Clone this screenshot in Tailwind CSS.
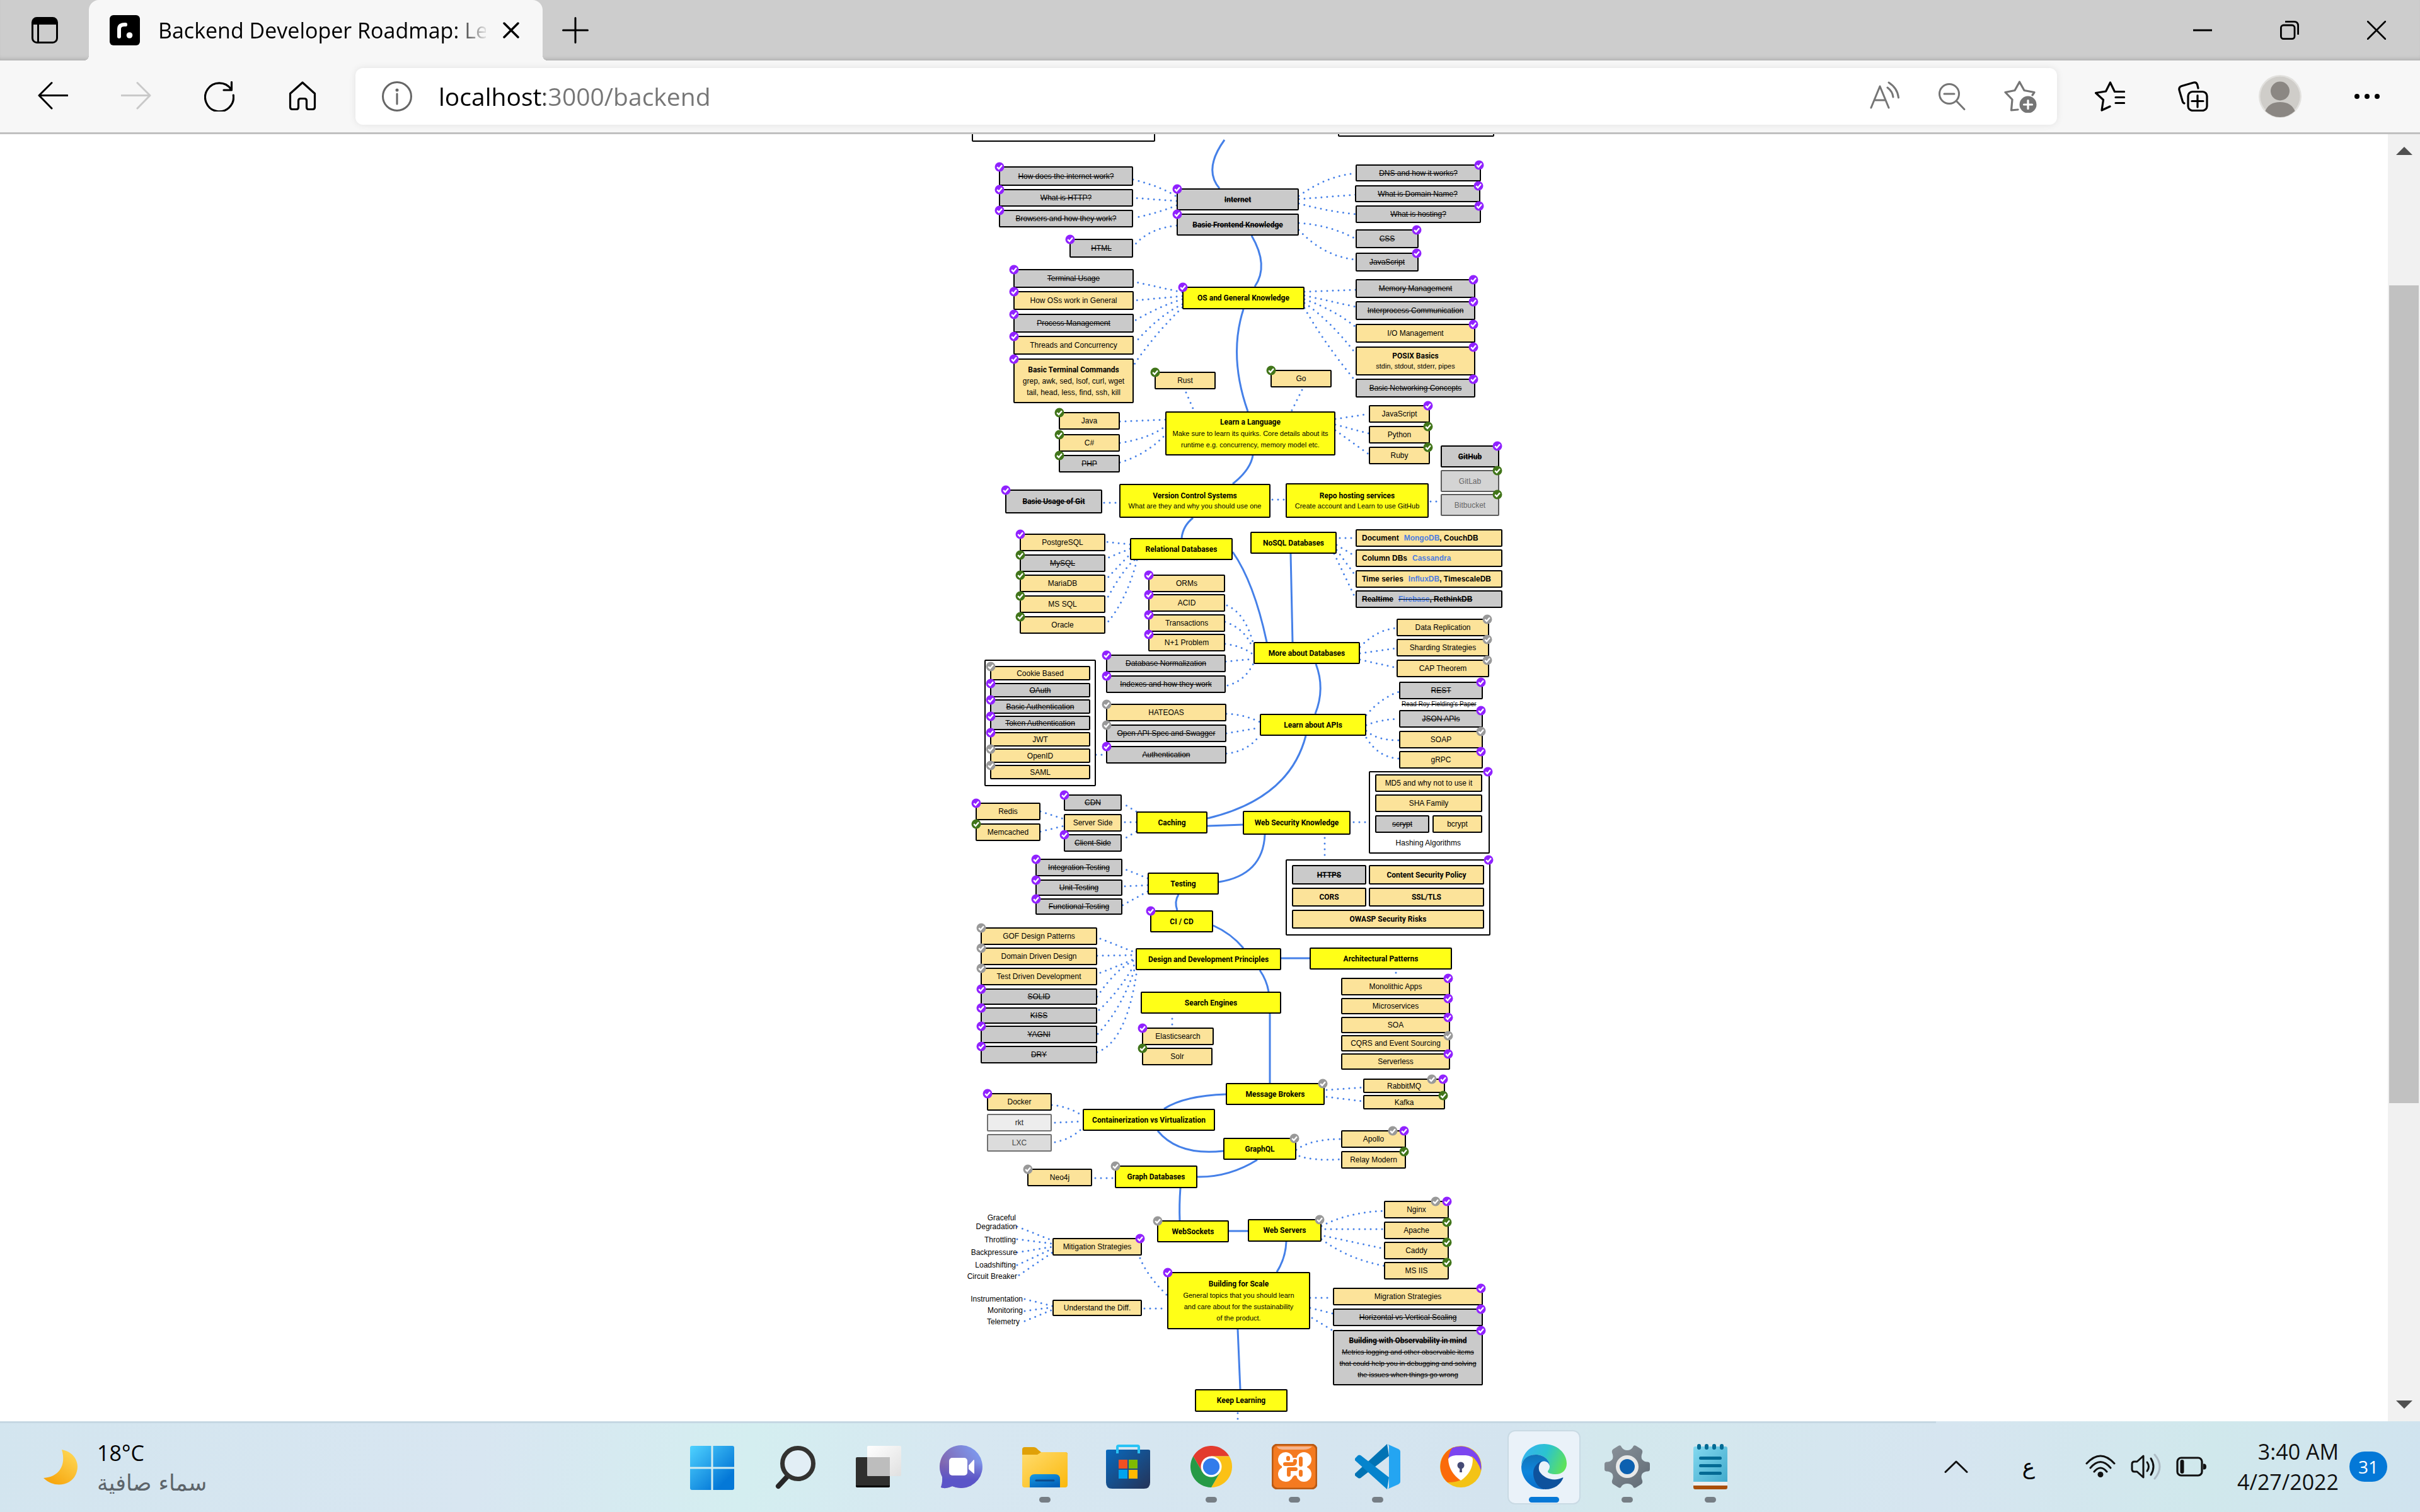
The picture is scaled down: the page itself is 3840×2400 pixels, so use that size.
<!DOCTYPE html>
<html lang="en">
<head>
<meta charset="utf-8">
<title>Backend Developer Roadmap: Learn to become a modern backend developer</title>
<script src="https://cdn.jsdelivr.net/npm/@tailwindcss/browser@4"></script>
</head>
<body class="h-screen overflow-hidden bg-white font-['Open_Sans',sans-serif] text-black">
<div class="flex h-full flex-col">

  <!-- Tab strip -->
  <header class="flex h-24 shrink-0 bg-[#cdcdcd] shadow-[inset_0_-6px_6px_-4px_rgba(0,0,0,0.16)]">
    <button aria-label="Tab actions" class="flex w-[141px] items-center justify-center">
      <svg class="size-[42px]" viewBox="0 0 42 42" fill="none" stroke="#000" stroke-width="3"><rect x="1.5" y="1.5" width="39" height="39" rx="7"/><path d="M2 6Q2 2 8 2H34Q40 2 40 8V12H2Z" fill="#000" stroke="none"/><path d="M10.5 12V40"/></svg>
    </button>
    <div class="relative flex w-[720px] items-center rounded-t-2xl bg-[#f7f7f7] pr-[30px] pl-[33px]">
      <span class="absolute bottom-0 -left-2 size-2 bg-[radial-gradient(circle_at_0_0,transparent_8px,#f7f7f7_8px)]"></span>
      <span class="absolute -right-2 bottom-0 size-2 bg-[radial-gradient(circle_at_100%_0,transparent_8px,#f7f7f7_8px)]"></span>
      <svg class="size-12 shrink-0" viewBox="0 0 48 48"><rect width="48" height="48" rx="6"/><path d="M15 34V22Q15 14.500 25 15" fill="none" stroke="#fff" stroke-width="6" stroke-linecap="round"/><circle cx="31.500" cy="32" r="4.800" fill="#fff"/></svg>
      <span class="ml-[29px] w-[520px] overflow-hidden text-[34px] leading-12 whitespace-nowrap [mask-image:linear-gradient(90deg,#000_470px,transparent_525px)]">Backend Developer Roadmap: Learn</span>
      <button aria-label="Close tab" class="ml-auto flex size-10 items-center justify-center">
        <svg class="size-[26px]" viewBox="0 0 26 26" stroke="#000" stroke-width="3.500" stroke-linecap="round"><path d="M2 2L24 24M24 2L2 24"/></svg>
      </button>
    </div>
    <button aria-label="New tab" class="flex w-26 items-center justify-center">
      <svg class="size-[42px]" viewBox="0 0 42 42" stroke="#000" stroke-width="3" stroke-linecap="round"><path d="M21 1.500V40.500M1.500 21H40.500"/></svg>
    </button>
    <div class="ml-auto flex">
      <button aria-label="Minimize" class="flex w-[138px] items-center justify-center"><svg class="size-[30px]" viewBox="0 0 30 30"><path d="M0 15H30" stroke="#000" stroke-width="3"/></svg></button>
      <button aria-label="Restore" class="flex w-[138px] items-center justify-center"><svg class="size-[30px]" viewBox="0 0 30 30" fill="none" stroke="#000" stroke-width="2.800"><rect x="1.400" y="7" width="21.600" height="21.600" rx="4"/><path d="M8 1.400H22Q28.600 1.400 28.600 8V22"/></svg></button>
      <button aria-label="Close window" class="flex w-[138px] items-center justify-center"><svg class="size-[30px]" viewBox="0 0 30 30"><path d="M0 0L30 30M30 0L0 30" stroke="#000" stroke-width="2.800"/></svg></button>
    </div>
  </header>

  <!-- Toolbar -->
  <nav class="flex h-[117px] shrink-0 items-center border-b-3 border-[#c0c0c0] bg-[#f7f7f7] px-[18px]">
    <button aria-label="Back" class="flex w-33 justify-center"><svg class="size-12" viewBox="0 0 48 48" fill="none" stroke="#000" stroke-width="3" stroke-linecap="round" stroke-linejoin="round"><path d="M47 22.500H2M22 2.500L2 22.500L22 43"/></svg></button>
    <button aria-label="Forward" class="flex w-33 justify-center"><svg class="size-12" viewBox="0 0 48 48" fill="none" stroke="#c9c9c9" stroke-width="3" stroke-linecap="round" stroke-linejoin="round"><path d="M1 22.500H46M26 2.500L46 22.500L26 43"/></svg></button>
    <button aria-label="Refresh" class="flex w-33 justify-center"><svg class="size-12" viewBox="0 0 48 48" fill="none" stroke="#000" stroke-width="3.200" stroke-linecap="round" stroke-linejoin="round"><path d="M46.300 22A22.500 22.500 0 1 1 42.500 12.500M43.500 1.500V14H31"/></svg></button>
    <button aria-label="Home" class="flex w-33 justify-center"><svg class="size-12" viewBox="0 0 48 48" fill="none" stroke="#000" stroke-width="3.200" stroke-linejoin="round"><path d="M4.500 19.500L24 2L43.500 19.500V41Q43.500 44.500 40 44.500H33.500Q30.500 44.500 30.500 41V31Q30.500 27.500 27 27.500H21Q17.500 27.500 17.500 31V41Q17.500 44.500 14.500 44.500H8Q4.500 44.500 4.500 41Z"/></svg></button>
    <div class="mx-[18px] flex h-[90px] grow items-center rounded-xl bg-white pr-1 pl-[42px] shadow-[0_0_12px_rgba(0,0,0,0.09)]">
      <button aria-label="View site information"><svg class="size-12" viewBox="0 0 48 48" fill="none" stroke="#666" stroke-width="3"><circle cx="24" cy="24" r="22.500"/><path d="M24 20V36" stroke-linecap="round"/><circle cx="24" cy="14" r="2.500" fill="#666" stroke="none"/></svg></button>
      <input aria-label="Address" value="localhost:3000/backend" class="ml-[42px] min-w-0 grow bg-[linear-gradient(90deg,#000_168px,#767676_168px)] bg-clip-text text-[39px] leading-13 text-transparent outline-none">
      <button aria-label="Read aloud" class="flex w-27 justify-center"><svg class="size-12" viewBox="0 0 48 48" fill="none" stroke="#757575" stroke-width="3" stroke-linecap="round" stroke-linejoin="round"><path d="M3 42L17 8L31 42M8 30H26M29 10Q37 16 38 25M31 2Q45 11 46.500 26"/></svg></button>
      <button aria-label="Zoom out" class="flex w-27 justify-center"><svg class="size-12" viewBox="0 0 48 48" fill="none" stroke="#757575" stroke-width="3" stroke-linecap="round"><circle cx="19" cy="20" r="15.500"/><path d="M11 20H27M31 32L43 44.500"/></svg></button>
      <button aria-label="Add this page to favorites" class="flex w-27 justify-center"><svg class="h-13 w-[52px]" viewBox="0 0 52 52" fill="none" stroke="#757575" stroke-width="3.200" stroke-linejoin="round" stroke-linecap="round"><path d="M22 47L11.500 48L13 31L2 19.500L17 16.500L24.500 3L32 16.500L48 19.500L45 24"/><circle cx="38" cy="39" r="13.500" fill="#757575" stroke="none"/><path d="M38 32.500V45.500M31.500 39H44.500" stroke="#fff"/></svg></button>
    </div>
    <button aria-label="Favorites" class="flex w-33 justify-center"><svg class="size-12" viewBox="0 0 48 48" fill="none" stroke="#000" stroke-width="3.200" stroke-linecap="round" stroke-linejoin="round"><path d="M24 40L11 46L13.500 29.500L1.500 18.500L17.500 16L24.500 2L31.500 16.500H46.500M33 25.500H46.500M33 34.500H46.500"/></svg></button>
    <button aria-label="Collections" class="flex w-33 justify-center"><svg class="size-12" viewBox="0 0 48 48" fill="none" stroke="#000" stroke-width="3.200" stroke-linecap="round" stroke-linejoin="round"><path d="M10 35Q7.500 34 7 31L2 14Q1 9 6 7.500L25 2Q29 1 30.500 5L32 11"/><rect x="16" y="16.500" width="30" height="30" rx="7"/><path d="M31 22.500V41M22 31.500H40"/></svg></button>
    <button aria-label="Profile" class="flex w-36 justify-center"><svg class="size-[68px]" viewBox="0 0 68 68"><defs><clipPath id="face"><circle cx="34" cy="34" r="33"/></clipPath></defs><circle cx="34" cy="34" r="34" fill="#e2e1de"/><circle cx="34" cy="34" r="31.500" fill="#cfcdc9"/><g fill="#8b8783" clip-path="url(#face)"><circle cx="34" cy="25.500" r="15"/><path d="M10 58Q16 43 34 43T58 58Q48 68 34 68T10 58Z"/></g></svg></button>
    <button aria-label="Settings and more" class="flex w-33 justify-center"><svg class="size-12" viewBox="0 0 48 48"><circle cx="8" cy="24" r="4"/><circle cx="24" cy="24" r="4"/><circle cx="40" cy="24" r="4"/></svg></button>
  </nav>

  <!-- Page viewport -->
  <div class="flex min-h-0 grow">
    <main class="min-w-0 grow overflow-hidden pl-[131px]">
      <div id="map" class="relative mx-auto h-full w-[880px] font-['Liberation_Sans',sans-serif] text-xs">
        <svg id="links" class="absolute inset-0 h-full w-full overflow-visible" fill="none" stroke="#4580e8" stroke-width="3"></svg>
      </div>
    </main>
    <aside class="flex w-[51px] shrink-0 flex-col items-center bg-[#f1f1f1]">
      <svg class="mt-5 h-[13px] w-[26px]" viewBox="0 0 26 13"><path d="M0 13L13 0L26 13Z" fill="#505050"/></svg>
      <div class="mt-[207px] h-[1298px] w-[47px] bg-[#c1c1c1]"></div>
      <svg class="mt-auto mb-5 h-[13px] w-[26px]" viewBox="0 0 26 13"><path d="M0 0L13 13L26 0Z" fill="#505050"/></svg>
    </aside>
  </div>

  <!-- Taskbar -->
  <footer class="relative grid h-36 shrink-0 grid-cols-[1fr_auto_1fr] items-center bg-[linear-gradient(100deg,#d3e5ef_0%,#d8e6f1_20%,#d4eef0_31%,#d7e7f1_40%,#d4e4ef_62%,#d3e8ed_66%,#d6e5f0_80%,#d0e8ec_91%,#d0e3ef_100%)]">
    <span class="absolute top-0 left-0 h-[3px] w-4/5 bg-[#c5d7e2]"></span>
    <button class="flex items-center pt-1 pl-[62px] text-left">
      <svg class="size-[66px]" viewBox="0 0 66 66"><defs><linearGradient id="moon" x1="1" y1="0" x2="0.300" y2="1"><stop offset="0" stop-color="#ffdc5c"/><stop offset="1" stop-color="#f7a60e"/></linearGradient></defs><path d="M36 4C58 8 66 28 58 44C50 61 24 66 7 49C30 48 44 30 36 4Z" fill="url(#moon)"/></svg>
      <span class="ml-[26px] flex flex-col">
        <span class="text-[34px] leading-12">18°C</span>
        <span dir="rtl" class="font-['DejaVu_Sans',sans-serif] text-[35px] leading-12 text-[#5d646a]">سماء صافية</span>
      </span>
    </button>

    <div class="ml-1 flex h-36">
      <button aria-label="Start" class="flex w-33 items-center justify-center pt-[3px]"><svg class="size-[70px]" viewBox="0 0 70 70"><defs><linearGradient id="win" x1="0" y1="0" x2="1" y2="1"><stop offset="0" stop-color="#4fd2ff"/><stop offset="0.800" stop-color="#0478d7"/></linearGradient></defs><path d="M3 0H33.500V33.500H0V3Q0 0 3 0ZM36.500 0H67Q70 0 70 3V33.500H36.500ZM0 36.500H33.500V70H3Q0 70 0 67ZM36.500 36.500H70V67Q70 70 67 70H36.500Z" fill="url(#win)"/></svg></button>
      <button aria-label="Search" class="flex w-33 items-center justify-center pt-[3px]"><svg class="size-[70px]" viewBox="0 0 70 70" fill="none"><path d="M22 49L8 64" stroke="#262626" stroke-width="8" stroke-linecap="round"/><circle cx="39" cy="28" r="24.500" fill="#e2eef5" stroke="#333230" stroke-width="7"/></svg></button>
      <button aria-label="Task view" class="flex w-33 items-center justify-center"><svg class="size-[72px]" viewBox="0 0 72 72"><defs><linearGradient id="tv" x1="0" y1="0" x2="1" y2="1"><stop offset="0" stop-color="#fff"/><stop offset="1" stop-color="#e0e0e0"/></linearGradient></defs><rect y="21" width="54" height="48" rx="2" fill="#2f2f2e"/><path d="M0 66H54Q54 69 51 69H3Q0 69 0 66Z" fill="#000"/><rect x="18" y="3" width="54" height="48" rx="2" fill="url(#tv)"/><path d="M18 21H54V51H20Q18 51 18 49Z" fill="#bdbdbd"/></svg></button>
      <button aria-label="Chat" class="flex w-33 items-center justify-center"><svg class="size-[70px]" viewBox="0 0 70 70"><defs><linearGradient id="chat" x1="1" y1="0.200" x2="0.200" y2="0.700"><stop offset="0" stop-color="#7d9cf3"/><stop offset="1" stop-color="#8165ae"/></linearGradient><linearGradient id="chat2" x1="0" y1="0" x2="0" y2="1"><stop offset="0.400" stop-color="#5b55c8" stop-opacity="0"/><stop offset="0.800" stop-color="#5b55c8"/></linearGradient></defs><path d="M35 1A34 34 0 1 1 20 66Q10 71 2 68Q5 60 4 51A34 34 0 0 1 35 1Z" fill="url(#chat)"/><path d="M35 1A34 34 0 1 1 20 66Q10 71 2 68Q5 60 4 51A34 34 0 0 1 35 1Z" fill="url(#chat2)"/><rect x="15" y="21" width="29" height="28" rx="5" fill="#fff"/><path d="M46 33L54 24Q55 24 55 26V45Q55 47 54 46L46 39Z" fill="#fff"/></svg></button>
      <button aria-label="File Explorer" class="relative flex w-33 items-center justify-center"><svg class="size-[72px]" viewBox="0 0 72 72"><defs><linearGradient id="fold" x1="0" y1="0" x2="1" y2="1"><stop offset="0" stop-color="#ffdc6e"/><stop offset="1" stop-color="#fbb80c"/></linearGradient><linearGradient id="fold2" x1="0" y1="0" x2="0.600" y2="1"><stop offset="0" stop-color="#169be4"/><stop offset="1" stop-color="#0463ba"/></linearGradient></defs><path d="M0 9Q0 5 4 5H18Q22 5 25 9L30 13H68Q72 13 72 16V30H0Z" fill="#e0a108"/><path d="M0 17H24L30 13H69Q72 14 72 17V65Q72 69 68 69H4Q0 69 0 65Z" fill="url(#fold)"/><path d="M12 69V56Q12 48 20 48H52Q60 48 60 56V69Z" fill="url(#fold2)"/><path d="M22 58H50" stroke="#0a4a8c" stroke-width="3" stroke-linecap="round"/></svg><span class="absolute bottom-[15px] h-[9px] w-[18px] rounded-full bg-[#767e85]"></span></button>
      <button aria-label="Microsoft Store" class="flex w-33 items-center justify-center"><svg class="size-[72px]" viewBox="0 0 72 72"><defs><linearGradient id="store" x1="0" y1="0" x2="1" y2="1"><stop offset="0" stop-color="#0969bd"/><stop offset="1" stop-color="#253357"/></linearGradient></defs><path d="M1 11Q1 9 4 9H68Q71 9 71 11V61Q71 71 61 71H11Q1 71 1 61Z" fill="url(#store)"/><path d="M19 15V5Q19 3 21 3H51Q53 3 53 5V15" fill="none" stroke="#29c3f5" stroke-width="4"/><path d="M21 25H35V39H21Z" fill="#f25022"/><path d="M37 25H51V39H37Z" fill="#7fba00"/><path d="M21 41H35V55H21Z" fill="#00a4ef"/><path d="M37 41H51V55H37Z" fill="#ffb900"/></svg></button>
      <button aria-label="Google Chrome" class="relative flex w-33 items-center justify-center"><svg class="size-[66px]" viewBox="-33 -33 66 66"><path d="M-28.600 -16.500A33 33 0 0 1 28.600 -16.500H0L-14.300 8.200Z" fill="#e33b2e"/><path d="M28.600 -16.500A33 33 0 0 1 0 33L14.300 8.200L0 -16.500Z" fill="#fbc116"/><path d="M0 33A33 33 0 0 1 -28.600 -16.500L-14.300 8.200L14.300 8.200Z" fill="#269a46"/><circle r="16.500" fill="#fff"/><circle r="13.200" fill="#327ceb"/></svg><span class="absolute bottom-[15px] h-[9px] w-[18px] rounded-full bg-[#767e85]"></span></button>
      <button aria-label="XAMPP" class="relative flex w-33 items-center justify-center"><svg class="size-[72px]" viewBox="0 0 72 72"><rect x="1" y="1" width="70" height="70" rx="8" fill="#f47a20" stroke="#b85a15" stroke-width="3"/><path d="M8 4H64Q60 9 50 9H20Q10 9 8 4Z" fill="#f5b48e"/><g fill="#fff"><circle cx="22" cy="25" r="12"/><circle cx="51" cy="25" r="12"/><circle cx="22" cy="48" r="12"/><circle cx="51" cy="48" r="12"/><path d="M16 33H56V42H16ZM26 22H46V52H26Z"/></g><path d="M36 12V19M37 53V62" stroke="#f47a20" stroke-width="6" stroke-linecap="round"/><path d="M21 32H33Q37 32 37 27M26 22V24M46 23V33M38 40H27V49M46 44V49" fill="none" stroke="#f47a20" stroke-width="6" stroke-linecap="round" stroke-linejoin="round"/></svg><span class="absolute bottom-[15px] h-[9px] w-[18px] rounded-full bg-[#767e85]"></span></button>
      <button aria-label="Visual Studio Code" class="relative flex w-33 items-center justify-center"><svg class="size-[72px]" viewBox="0 0 72 72"><path d="M51 0L0 47Q-1 49 1 51L5 54Q7 55 9 54L54 19Z" fill="#0073b4"/><path d="M54 53L9 18Q7 17 5 18L1 22Q-1 24 0 26L51 72Z" fill="#0584cd"/><path d="M51 72Q54 71 54 68V4Q54 1 51 0L69 8Q72 9.500 72 12V60Q72 62.500 69 64Z" fill="#24a5f2"/></svg><span class="absolute bottom-[15px] h-[9px] w-[18px] rounded-full bg-[#767e85]"></span></button>
      <button aria-label="Secure Browser" class="flex w-33 items-center justify-center"><svg class="size-[66px]" viewBox="0 0 66 66"><circle cx="33" cy="33" r="33" fill="#f3c316"/><path d="M22 2A33 33 0 0 0 12 58Q26 58 33 54L14 22Z" fill="#fb6b0a"/><path d="M18 4A33 33 0 0 1 65 39Q60 24 51 17L13 21Q15 8 20 3Z" fill="#7c45f0"/><path d="M13 21Q15 16 25 15H41Q51 16 52 21Q52 42 33 55Q14 42 13 21Z" fill="#fff"/><circle cx="33" cy="31" r="5.500" fill="#454a75"/><path d="M31.500 33H34.500L35 42H31Z" fill="#454a75"/></svg></button>
      <button aria-label="Microsoft Edge" class="relative flex w-33 items-center justify-center"><span class="absolute inset-x-2 top-[14px] bottom-3 rounded-xl border-2 border-[#c9dae4] bg-[#eaf2f9]"></span><svg class="relative size-[72px]" viewBox="0 0 72 72"><defs><linearGradient id="e1" x1="0" y1="0.300" x2="1" y2="0.600"><stop offset="0" stop-color="#35b3f0"/><stop offset="0.500" stop-color="#2bc3cf"/><stop offset="1" stop-color="#5fe25a"/></linearGradient><linearGradient id="e2" x1="0.300" y1="0" x2="0.300" y2="1"><stop offset="0" stop-color="#1273b8"/><stop offset="0.500" stop-color="#0e86dc"/><stop offset="1" stop-color="#0a6cc8"/></linearGradient></defs><path d="M0 33C2 13 17 0 36 0C56 0 72 14 72 31C72 42 64 48 55 48C47 48 42 46 42 44C42 42 45 41 45 35C45 24 34 17 23 17C11 17 2 25 0 33Z" fill="url(#e1)"/><path d="M0 36C1 24 11 17 23 17C34 17 45 24 45 35C43 27 35 26 31 29C22 34 20 52 36 65L36 72C16 72 0 56 0 36Z" fill="url(#e2)"/><path d="M33 27C24 30 19 38 19 46C19 60 28 71 38 72C53 72 62 64 66 55C67 53 66 53 64 54C51 60 35 54 29 44C26 37 29 30 33 27Z" fill="#0e529d"/></svg><span class="absolute bottom-[15px] h-[9px] w-12 rounded-full bg-[#0678d6]"></span></button>
      <button aria-label="Settings" class="relative flex w-33 items-center justify-center"><svg class="size-[72px]" viewBox="-36 -36 72 72"><defs><linearGradient id="gear" x1="0" y1="0" x2="1" y2="1"><stop offset="0" stop-color="#8d949c"/><stop offset="1" stop-color="#5f6a74"/></linearGradient></defs><path d="M-22 -28L-14 -33Q-10 -35 -9 -31Q-6 -26 0 -26T9 -31Q10 -35 14 -33L22 -28Q25 -26 24 -22Q21 -15 24 -11Q28 -7 33 -7.500Q36 -7 36 -4V4Q36 7 33 7.500Q28 7 24 11Q21 15 24 22Q25 26 22 28L14 33Q10 35 9 31Q6 27 0 27T-9 31Q-10 35 -14 33L-22 28Q-25 26 -24 22Q-21 15 -24 11Q-28 7 -33 7.500Q-36 7 -36 4V-4Q-36 -7 -33 -7.500Q-28 -7 -24 -11Q-21 -15 -24 -22Q-25 -26 -22 -28Z" fill="url(#gear)"/><circle r="15" fill="#0c60b0" stroke="#e8e8e8" stroke-width="6"/></svg><span class="absolute bottom-[15px] h-[9px] w-[18px] rounded-full bg-[#767e85]"></span></button>
      <button aria-label="Notepad" class="relative flex w-33 items-center justify-center"><svg class="h-[72px] w-[54px]" viewBox="0 0 54 72"><defs><linearGradient id="note" x1="0" y1="0" x2="1" y2="1"><stop offset="0" stop-color="#84d9f0"/><stop offset="1" stop-color="#41aacc"/></linearGradient></defs><path d="M0 60H54V69Q54 72 51 72H3Q0 72 0 69Z" fill="#a94f0b"/><path d="M0 56H54V66H0Z" fill="#eee"/><path d="M0 7Q0 4 3 4H51Q54 4 54 7V60H0Z" fill="url(#note)"/><path d="M9 3V6M21 3V6M33 3V6M45 3V6" stroke="#046a94" stroke-width="6" stroke-linecap="round"/><path d="M11.500 22.500H42.500M11.500 34.500H42.500M11.500 46.500H42.500" stroke="#046a94" stroke-width="5" stroke-linecap="round"/></svg><span class="absolute bottom-[15px] h-[9px] w-[18px] rounded-full bg-[#767e85]"></span></button>
    </div>

    <div class="flex items-center justify-end pr-[52px]">
      <button aria-label="Show hidden icons"><svg class="h-5 w-[38px]" viewBox="0 0 38 20" fill="none" stroke="#111" stroke-width="3" stroke-linecap="round" stroke-linejoin="round"><path d="M2 18.500L19 2L36 18.500"/></svg></button>
      <button aria-label="Keyboard language" class="ml-20 w-8 font-['DejaVu_Sans',sans-serif] text-[34px] leading-12">ع</button>
      <button aria-label="Network, sound and battery" class="ml-[74px] flex items-center gap-6">
        <svg class="size-12" viewBox="0 0 48 48" fill="none" stroke="#111" stroke-width="3" stroke-linecap="round"><path d="M2 19Q24 -5 46 19M8 26Q24 7 40 26M14 32Q24 20 34 32"/><circle cx="24" cy="36.500" r="4.500" fill="#111" stroke="none"/></svg>
        <svg class="size-12" viewBox="0 0 48 48" fill="none" stroke="#111" stroke-width="3" stroke-linecap="round" stroke-linejoin="round"><path d="M2 20Q2 16 6 16H10L20 7V41L10 32H6Q2 32 2 28ZM26 17Q31 24 26 31M32 11Q40 24 32 37"/><path d="M38 5Q54 24 38 43" stroke="#aebbc4"/></svg>
        <svg class="size-12" viewBox="0 0 48 48" fill="none" stroke="#111" stroke-width="3.200"><rect x="2" y="10" width="39" height="28" rx="6"/><path d="M9.500 16V32" stroke-width="6" stroke-linecap="round"/><path d="M43 19.500H45Q48 20 48 24T45 28.500H43Z" fill="#111" stroke="none"/></svg>
      </button>
      <button class="ml-[42px] flex w-[168px] flex-col text-right text-[34px] leading-12 whitespace-nowrap text-[#111]"><span class="w-full">3:40 AM</span><span class="w-full">4/27/2022</span></button>
      <button aria-label="31 notifications" class="ml-[17px] h-12 w-15 rounded-full bg-[#0478d7] text-[28px] leading-12 text-white">31</button>
    </div>
  </footer>
</div>

<script>
// Connector curves between topics; dotted ones lead to sub-topics.
const solid = [
  "M423 9Q389 56 415 86","M466 161Q494 209 471 242","M453 278Q429 352 460 440","M468 510Q464 533 436 555","M373 609Q357 622 355 641",
  "M436 663Q470 712 490 806","M528 666L531 806","M568 841Q583 880 567 920","M552 955Q526 1055 396 1086","M396 1098L452 1096",
  "M487 1112Q484 1176 414 1187","M350 1207Q343 1218 348 1232","M405 1256Q434 1269 453 1292","M479 1327Q490 1343 493 1361","M495 1396V1506",
  "M513 1308H558","M425 1524Q360 1526 327 1547","M317 1582Q350 1622 421 1614","M475 1628Q430 1656 380 1655","M353 1673Q351 1700 352 1724",
  "M430 1741H460","M521 1758Q520 1784 506 1806","M444 1897L448 1992"
];
const dotted = [
  "M278 72Q320 82 347 99","M347 106L278 101","M347 113Q315 126 278 133","M347 145Q300 150 278 179","M541 98Q585 66 631 62","M541 103L631 96","M541 110Q585 122 631 127","M541 141Q590 144 631 166","M541 152Q580 194 631 199",
  "M356 251L279 234","M356 257L279 264","M356 262Q315 275 279 297","M356 270Q320 287 282 330","M356 275Q310 320 280 365",
  "M550 250L631 247","M550 256L631 274","M550 262Q600 280 631 306","M550 268Q590 295 631 348","M550 276Q580 330 631 392",
  "M362 410L375 440","M546 406L529 440","M257 456L329 453","M257 490Q300 484 329 464","M257 521Q300 508 329 477","M599 452L652 444","M599 461L652 475","M599 470L652 508",
  "M232 585H256","M499 580H520","M750 583H766","M273 651L234 647","M273 658L234 674","M276 664Q260 680 234 708","M280 676Q262 690 234 742","M284 676Q268 740 234 779",
  "M606 641H631","M601 652L631 670","M601 660L631 701","M597 666L631 737",
  "M427 748Q455 760 468 806","M424 774Q455 785 466 812","M424 809Q450 812 469 826","M425 837L469 833","M428 875Q455 868 469 840",
  "M638 814Q665 786 696 784","M638 824L696 816","M638 834L696 847","M426 920Q455 921 479 933","M426 951L479 942","M426 983Q460 980 479 954","M219 985H235",
  "M648 922Q672 894 700 885","M648 938Q670 929 700 928","M648 947Q665 962 700 962","M648 958Q668 990 700 991",
  "M283 1075L261 1062","M283 1092H261","M283 1107L261 1120","M131 1075L168 1087","M131 1107L168 1098","M628 1092H652","M582 1117V1150",
  "M301 1181L261 1165","M301 1192L261 1194","M301 1202L261 1224","M226 1277L282 1299","M221 1304L282 1303","M226 1331Q260 1318 282 1308","M221 1369Q250 1325 282 1310","M224 1390Q255 1362 282 1315","M222 1428Q262 1385 282 1320","M221 1457Q268 1440 284 1327",
  "M340 1404V1418","M695 1331V1339","M585 1517L643 1513","M585 1528L643 1535","M149 1541Q175 1543 198 1558","M154 1569L198 1567","M154 1600Q180 1595 198 1577",
  "M537 1612Q560 1595 608 1595","M542 1622Q565 1630 608 1627","M218 1657H249","M577 1733Q620 1711 676 1709","M583 1738H676","M582 1749L676 1769","M577 1754Q620 1786 676 1796",
  "M94 1734L150 1756","M94 1754L150 1761","M94 1775L150 1766","M94 1795L150 1769","M97 1811L150 1775","M289 1784Q300 1812 332 1843",
  "M106 1849L150 1860","M106 1868L150 1862","M106 1884L150 1866","M296 1864H332","M559 1847H595","M559 1863L595 1872","M562 1879L595 1899","M444 2030V2050"
];
document.getElementById("links").innerHTML =
  solid.map(d => `<path d="${d}"/>`).join("") +
  dotted.map(d => `<path d="${d}" stroke-dasharray="0 9" stroke-linecap="round"/>`).join("");

const kinds = {
  topic: "border-black bg-[#ffff17] font-['Roboto',sans-serif] font-bold",
  item: "border-black bg-[#fce39a]",
  done: "border-black bg-[#cacaca] line-through",
  itemB: "border-black bg-[#fce39a] font-['Roboto',sans-serif] font-bold",
  doneB: "border-black bg-[#cacaca] font-['Roboto',sans-serif] font-bold line-through",
  frame: "border-black bg-white",
  off: "border-[#5c5c5c] bg-[#d4d4d4] text-[#666]",
  skip: "border-[#707070] bg-[#ededed] text-[#222]",
  skip2: "border-[#707070] bg-[#dcdcdc] text-[#444]"
};
const tones = { p: "#9022ff", g: "#41751a", x: "#999999" };
const small = (...lines) => lines.map(t => `<span class="font-['Liberation_Sans',sans-serif] text-[11px] font-normal">${t}</span>`).join("");
const plain = (...lines) => lines.map(t => `<span class="font-['Liberation_Sans',sans-serif] font-normal">${t}</span>`).join("");
const row = (a, b, c) => `<span class="flex w-full gap-2 pl-2 font-['Liberation_Sans',sans-serif]"><span>${a}</span><span><span class="text-[#4d7de0]">${b}</span>${c}</span></span>`;
// kind, x, y, width, height, label, marks (corner + tone; corners: "R" right, "L" left, "S" second from right)
const nodes = [
  ["frame",22,-20,291,32,""],["frame",603,-20,248,24,""],
  ["done",65,51,213,31,"How does the internet work?","Lp"],["done",65,87,213,28,"What is HTTP?","Lp"],["done",65,120,213,28,"Browsers and how they work?","Lp"],["done",177,166,101,30,"HTML","Lp"],
  ["done",88,214,191,30,"Terminal Usage","Lp"],["item",88,249,191,30,"How OSs work in General","Lp"],["done",88,285,191,30,"Process Management","Lp"],["item",88,320,191,30,"Threads and Concurrency","Lp"],
  ["itemB",88,356,191,71,"Basic Terminal Commands"+plain("grep, awk, sed, lsof, curl, wget","tail, head, less, find, ssh, kill"),"Lp"],
  ["doneB",347,86,194,35,"Internet","Lp"],["doneB",347,126,194,35,"Basic Frontend Knowledge","Lp"],["topic",356,242,194,36,"OS and General Knowledge","Lp"],
  ["done",631,48,199,27,"DNS and how it works?","Rp"],["done",630,81,199,27,"What is Domain Name?","Rp"],["done",631,113,199,28,"What is hosting?","Rp"],["done",631,151,100,30,"CSS","Rp"],["done",631,188,100,30,"JavaScript","Rp"],
  ["done",631,230,190,30,"Memory Management","Rp"],["done",631,265,190,30,"Interprocess Communication","Rp"],["item",631,301,190,30,"I/O Management","Rp"],["itemB",631,337,190,46,"POSIX Basics"+small("stdin, stdout, stderr, pipes"),"Rp"],["done",631,388,190,30,"Basic Networking Concepts","Rp"],
  ["item",312,377,97,28,"Rust","Lg"],["item",496,374,97,28,"Go","Lg"],
  ["topic",329,440,270,70,"Learn a Language"+small("Make sure to learn its quirks. Core details about its","runtime e.g. concurrency, memory model etc.")],
  ["item",160,441,97,28,"Java","Lg"],["item",160,476,97,28,"C#","Lg"],["done",160,509,97,28,"PHP","Lg"],
  ["item",652,430,97,28,"JavaScript","Rp"],["item",652,463,97,28,"Python","Rg"],["item",652,496,97,28,"Ruby","Rg"],
  ["doneB",766,494,93,35,"GitHub","Rp"],["off",766,533,93,35,"GitLab","Rg"],["off",766,571,93,35,"Bitbucket","Rg"],
  ["doneB",75,564,154,38,"Basic Usage of Git","Lp"],["topic",256,555,240,54,"Version Control Systems"+small("What are they and why you should use one")],["topic",520,554,227,55,"Repo hosting services"+small("Create account and Learn to use GitHub")],
  ["item",98,634,136,28,"PostgreSQL","Lp"],["done",98,667,136,28,"MySQL","Lg"],["item",98,699,136,28,"MariaDB","Lg"],["item",98,732,136,28,"MS SQL","Lg"],["item",98,765,136,28,"Oracle","Lg"],
  ["topic",273,641,163,35,"Relational Databases"],["topic",464,631,137,35,"NoSQL Databases"],
  ["itemB",631,627,233,28,row("Document","MongoDB",", CouchDB")],["itemB",631,659,233,28,row("Column DBs","Cassandra","")],["itemB",631,692,233,28,row("Time series","InfluxDB",", TimescaleDB")],["doneB",631,724,233,28,row("Realtime","Firebase",", RethinkDB")],
  ["item",302,699,122,28,"ORMs","Lp"],["item",302,730,122,28,"ACID","Lp"],["item",302,762,122,28,"Transactions","Lp"],["item",302,793,122,28,"N+1 Problem","Lp"],["done",235,826,190,28,"Database Normalization","Lp"],["done",235,859,190,28,"Indexes and how they work","Lp"],
  ["topic",469,806,169,35,"More about Databases"],["item",696,769,147,28,"Data Replication","Rx"],["item",696,801,147,28,"Sharding Strategies","Rx"],["item",696,834,147,28,"CAP Theorem","Rx"],
  ["frame",42,834,177,201,""],["item",51,844,159,23,"Cookie Based","Lx"],["done",51,871,159,23,"OAuth","Lp"],["done",51,897,159,23,"Basic Authentication","Lp"],["done",51,923,159,23,"Token Authentication","Lp"],["item",51,949,159,23,"JWT","Lp"],["item",51,975,159,23,"OpenID","Lx"],["item",51,1001,159,23,"SAML","Lx"],
  ["item",235,904,191,28,"HATEOAS","Lx"],["done",235,937,191,28,"Open API Spec and Swagger","Lx"],["done",235,971,191,28,"Authentication","Lp"],["topic",479,920,169,35,"Learn about APIs"],
  ["done",700,869,133,28,"REST","Rp"],["done",700,914,133,28,"JSON APIs","Rp"],["item",700,947,133,28,"SOAP","Rx"],["item",700,979,133,28,"gRPC","Rp"],
  ["frame",652,1011,192,131,"","Rp"],["item",662,1016,170,28,"MD5 and why not to use it"],["item",662,1048,170,28,"SHA Family"],["done",662,1081,86,28,"scrypt"],["item",753,1081,79,28,"bcrypt"],
  ["item",28,1061,103,28,"Redis","Lp"],["item",28,1094,103,28,"Memcached","Lg"],["done",168,1048,92,26,"CDN","Lp"],["item",168,1079,92,28,"Server Side"],["done",168,1111,92,28,"Client Side","Lp"],
  ["topic",283,1075,113,35,"Caching"],["topic",452,1074,171,38,"Web Security Knowledge"],
  ["done",123,1150,138,28,"Integration Testing","Lp"],["done",123,1183,138,26,"Unit Testing","Lp"],["done",123,1213,138,26,"Functional Testing","Lp"],["topic",301,1172,113,35,"Testing"],["topic",305,1232,100,35,"CI / CD","Lp"],
  ["frame",520,1151,325,121,"","Rp"],["doneB",530,1160,118,31,"HTTPS"],["itemB",652,1160,183,31,"Content Security Policy"],["itemB",530,1196,118,30,"CORS"],["itemB",652,1196,183,30,"SSL/TLS"],["itemB",530,1231,305,30,"OWASP Security Risks"],
  ["item",36,1259,185,28,"GOF Design Patterns","Lx"],["item",36,1291,185,28,"Domain Driven Design","Lx"],["item",36,1323,185,28,"Test Driven Development","Lx"],["done",36,1356,185,26,"SOLID","Lp"],["done",36,1386,185,26,"KISS","Lp"],["done",36,1415,185,28,"YAGNI","Lp"],["done",36,1447,185,28,"DRY","Lp"],
  ["topic",282,1292,231,35,"Design and Development Principles"],["topic",558,1291,226,35,"Architectural Patterns"],["topic",290,1361,223,35,"Search Engines"],["item",292,1418,114,28,"Elasticsearch","Lp"],["item",292,1450,112,28,"Solr","Lg"],
  ["item",608,1339,173,28,"Monolithic Apps","Rp"],["item",608,1371,173,26,"Microservices","Rp"],["item",608,1401,173,26,"SOA","Rp"],["item",608,1430,173,26,"CQRS and Event Sourcing","Rx"],["item",608,1459,173,26,"Serverless","Rp"],
  ["topic",425,1506,157,35,"Message Brokers","Rx"],["item",643,1499,130,23,"RabbitMQ","SxRp"],["item",643,1525,130,23,"Kafka","Rg"],
  ["item",46,1522,103,28,"Docker","Lp"],["skip",46,1555,103,28,"rkt"],["skip2",46,1587,103,28,"LXC"],["topic",198,1547,210,35,"Containerization vs Virtualization"],["topic",421,1593,116,35,"GraphQL","Rx"],
  ["item",608,1581,103,28,"Apollo","SxRp"],["item",608,1614,103,28,"Relay Modern","Rg"],["item",110,1642,103,28,"Neo4j","Lx"],["topic",249,1637,131,36,"Graph Databases","Lx"],
  ["topic",316,1724,114,35,"WebSockets","Lx"],["topic",460,1722,117,36,"Web Servers","Rx"],["item",676,1693,103,28,"Nginx","SxRp"],["item",676,1726,103,28,"Apache","Rg"],["item",676,1758,103,28,"Caddy","Rg"],["item",676,1790,103,28,"MS IIS","Rg"],
  ["item",150,1752,142,28,"Mitigation Strategies","Rp"],["item",150,1850,142,26,"Understand the Diff."],
  ["topic",332,1806,227,91,"Building for Scale"+small("General topics that you should learn","and care about for the sustainability","of the product."),"Lp"],
  ["item",595,1831,238,28,"Migration Strategies","Rp"],["done",595,1864,238,28,"Horizontal vs Vertical Scaling","Rp"],
  ["doneB",595,1898,238,88,"Building with Observability in mind"+small("Metrics logging and other observable items","that could help you in debugging and solving","the issues when things go wrong"),"Rp"],
  ["topic",376,1992,147,36,"Keep Learning"]
];
const mark = (left, top, tone) => `<svg class="absolute size-4" style="left:${left}px;top:${top}px" viewBox="0 0 16 16"><circle cx="8" cy="8" r="7.500" fill="${tone}"/><path d="M4.200 8.200L7 11L12 5.200" fill="none" stroke="#fff" stroke-width="2.400"/></svg>`;
let html = "", marks = "";
for (const [kind, x, y, w, h, label, m = ""] of nodes) {
  const lead = h > 60 ? "leading-[18px]" : "leading-4";
  html += `<div class="absolute flex flex-col items-center justify-center rounded-xs border-2 whitespace-nowrap ${lead} ${kinds[kind]}" style="left:${x}px;top:${y}px;width:${w}px;height:${h}px">${label}</div>`;
  for (let i = 0; i < m.length; i += 2) {
    const left = m[i] === "L" ? x - 7 : m[i] === "R" ? x + w - 11 : x + w - 29;
    marks += mark(left, y - 7, tones[m[i + 1]]);
  }
}
// Free-standing captions, right-aligned at x
for (const [x, y, label] of [[92,1712,"Graceful"],[94,1726,"Degradation"],[92,1747,"Throttling"],[94,1767,"Backpressure"],[92,1787,"Loadshifting"],[94,1805,"Circuit Breaker"],[103,1841,"Instrumentation"],[103,1859,"Monitoring"],[98,1877,"Telemetry"],[798,1117,"Hashing Algorithms"]])
  html += `<p class="absolute leading-4 whitespace-nowrap" style="right:${880 - x}px;top:${y}px">${label}</p>`;
html += `<a href="#" class="absolute text-[10px] leading-4 whitespace-nowrap line-through" style="left:704px;top:897px">Read Roy Fielding's Paper</a>`;
document.getElementById("map").insertAdjacentHTML("beforeend", html + marks);
</script>
</body>
</html>
